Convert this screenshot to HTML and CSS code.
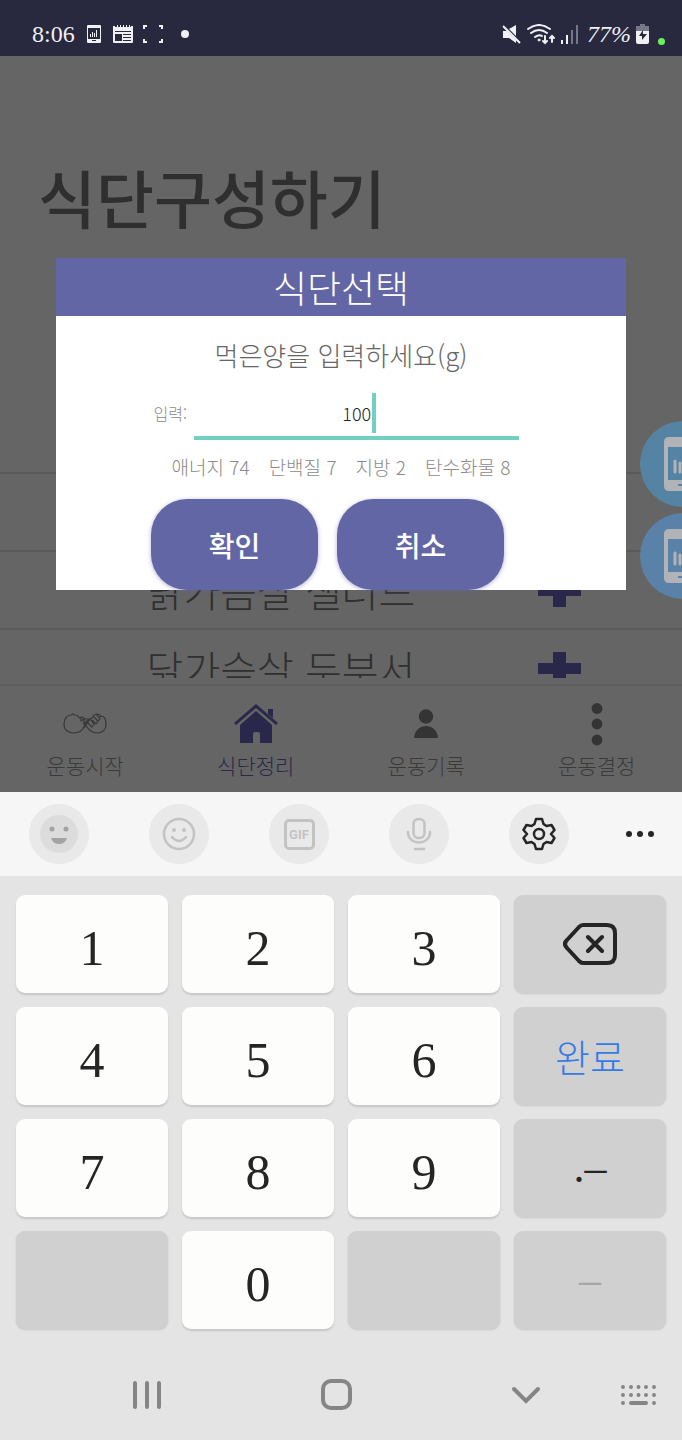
FILE: index.html
```html
<!DOCTYPE html>
<html lang="ko">
<head>
<meta charset="utf-8">
<meta name="viewport" content="width=device-width, initial-scale=1">
<title>식단구성하기</title>
<link rel="stylesheet" href="styles.css">
</head>
<body>
<header class="status">
  <div class="status-group">
    <time class="status-text">8:06</time>
    <svg class="ico-phone" width="14" height="18" viewBox="0 0 14 18"><path fill="#f0f0f5" fill-rule="evenodd" d="M1 0h12q1 0 1 1v16q0 1-1 1H1q-1 0-1-1V1q0-1 1-1zM1 3v11h12V3zM5 16h4v-1H5z"/><path stroke="#f0f0f5" d="M3.500 9v3M5.500 7v5M7.500 8v4M9.500 5v7"/></svg>
    <svg width="20" height="18" viewBox="0 0 20 18"><path fill="#f0f0f5" fill-rule="evenodd" d="M0 1h2v1h2V0h1v2h2V0h1v2h2V0h1v2h2V0h1v2h2V0h1v2h1V1h2v16q0 1-1 1H1q-1 0-1-1zM2 6v1h16V6zM2 9v7h7V9zM10 9v1h8V9zM10 12v1h8v-1zM10 15v1h8v-1z"/></svg>
    <svg width="20" height="18" viewBox="0 0 20 18" fill="none" stroke="#f0f0f5" stroke-width="2"><path d="M1 4V1h3M16 1h3v3M1 14v3h3M16 17h3v-3"/></svg>
    <span class="status-dot"></span>
  </div>
  <div class="status-group status-right">
    <svg width="20" height="20" viewBox="0 0 20 20"><path fill="#f0f0f5" d="M1 7h4l9 9v3l-7-5H1zM7 5l7-4v11z"/><path stroke="#f0f0f5" stroke-width="2" d="M1 2l17 17"/></svg>
    <svg width="28" height="21" viewBox="0 0 28 21" fill="none" stroke="#f0f0f5" stroke-width="2" stroke-linecap="round"><path d="M1 5Q12-3 23 5M4 9q8-6 16 0M8 13q4-3 7-1"/><circle cx="12" cy="16" r="1" fill="#f0f0f5" stroke-width="1"/><path d="M18 12v7M16 17l2 2 2-2M25 18v-6M23 14l2-2 2 2"/></svg>
    <svg width="18" height="19" viewBox="0 0 18 19" stroke-width="2" stroke="#f0f0f5"><path d="M2 15v4M7 10v9"/><path d="M12 5v14M17 0v19" stroke="#77778a"/></svg>
    <span class="status-text battery-text">77%</span>
    <svg width="13" height="20" viewBox="0 0 13 20"><path fill="#77778a" d="M4 0h5v2h4v7H0V2h4z"/><path fill="#f0f0f5" d="M0 7h13v11q0 2-2 2H2q-2 0-2-2z"/><path fill="#28283f" d="M7 6L3 12h3v4l5-6H7z"/></svg>
    <span class="privacy-dot"></span>
  </div>
</header>

<main class="app">
  <h1 class="page-title">식단구성하기</h1>
  <ul class="foods">
    <li class="food"></li>
    <li class="food">
      <span class="food-name">닭가슴살 샐러드</span>
      <button class="add" aria-label="추가"><svg width="43" height="33" viewBox="0 0 43 33"><path fill="#29284a" d="M15 0h13v11h15v11H28v11H15V22H0V11h15z"/></svg></button>
    </li>
    <li class="food">
      <span class="food-name">닭가슴살 두부서</span>
      <button class="add" aria-label="추가"><svg width="43" height="33" viewBox="0 0 43 33"><path fill="#29284a" d="M15 0h13v11h15v11H28v11H15V22H0V11h15z"/></svg></button>
    </li>
  </ul>
  <nav class="tabs">
    <a class="tab" href="#start">
      <svg width="44" height="44" viewBox="0 0 44 44" fill="none" stroke="#383838" stroke-width="1.200" stroke-linejoin="round"><path d="M22 24q-4 7-11 7C5 31 1 28 1 22c0-5 3-9 7-9l2-1 2 1 3 1 1 2 3-1 3 2h5l-4 6-3 3M18 15v4l3-2v4l3-2M20 26l5-8 4-2 2-3 3-1 3 1v2l2-1c3 1 4 5 4 8 0 6-4 9-9 9-6 0-9-5-14-10M27 17l4 5-2 3-4-4M30 14l5 5-2 3-4-4M33 12l4 5-2 2"/></svg>
      <span>운동시작</span>
    </a>
    <a class="tab tab-active" href="#diet">
      <svg width="44" height="44" viewBox="0 0 44 44" fill="#29284a"><path d="M22 2l22 19-2 2L22 6 2 23l-2-2zM34 7h5v9l-5-4zM22 9l16 14v18H26V32q0-2-2-2h-3q-2 0-2 2v9H6V23z"/></svg>
      <span>식단정리</span>
    </a>
    <a class="tab" href="#record">
      <svg width="44" height="44" viewBox="0 0 44 44" fill="#343434"><circle cx="22" cy="14.500" r="7.200"/><path d="M10 36c1-16 23-16 24 0z"/></svg>
      <span>운동기록</span>
    </a>
    <a class="tab" href="#decide">
      <svg width="44" height="44" viewBox="0 0 44 44" fill="#343434"><circle cx="22" cy="6.500" r="5.400"/><circle cx="22" cy="22" r="5.400"/><circle cx="22" cy="38" r="5.400"/></svg>
      <span>운동결정</span>
    </a>
  </nav>

  <div class="bubbles">
    <div class="bubble"><svg width="38" height="54" viewBox="0 0 38 54"><path fill="#b1b3b6" fill-rule="evenodd" d="M5 0h28q5 0 5 5v44q0 5-5 5H5q-5 0-5-5V5q0-5 5-5zM4 10v33h30V10zM14 47v2h10v-2z"/><path stroke="#b1b3b6" stroke-width="3" stroke-linecap="round" d="M11 24v11M16 26v9M22 20v15M28 17v18"/></svg></div>
    <div class="bubble bubble-alt"><svg width="38" height="54" viewBox="0 0 38 54"><path fill="#b1b3b6" fill-rule="evenodd" d="M5 0h28q5 0 5 5v44q0 5-5 5H5q-5 0-5-5V5q0-5 5-5zM4 10v33h30V10zM14 47v2h10v-2z"/><path stroke="#b1b3b6" stroke-width="3" stroke-linecap="round" d="M11 24v11M16 26v9M22 20v15M28 17v18"/></svg></div>
  </div>

  <div class="overlay">
    <form class="dialog" role="dialog" aria-labelledby="dialog-title">
      <h2 class="dialog-title" id="dialog-title">식단선택</h2>
      <p class="prompt">먹은양을 입력하세요(g)</p>
      <div class="field">
        <label class="field-label" for="amount">입력:</label>
        <div class="field-box">
          <input class="field-input" id="amount" type="text" inputmode="numeric" value="100">
          <span class="caret"></span>
        </div>
      </div>
      <div class="facts"><span>애너지 74</span><span>단백질 7</span><span>지방 2</span><span>탄수화물 8</span></div>
      <div class="actions">
        <button class="action" type="button">확인</button>
        <button class="action" type="button">취소</button>
      </div>
    </form>
  </div>
</main>

<section class="keyboard">
  <div class="tools">
    <button class="tool" aria-label="스티커"><svg width="38" height="38" viewBox="0 0 38 38"><circle cx="19" cy="19" r="19" fill="#dcdcdc"/><g fill="#a3a3a3"><circle cx="12" cy="14" r="2.500"/><circle cx="26" cy="14" r="2.500"/><path d="M11 23h16q-2 6-8 6t-8-6z"/></g></svg></button>
    <button class="tool" aria-label="이모티콘"><svg width="34" height="34" viewBox="0 0 34 34" fill="none" stroke="#c3c3c3" stroke-width="2.500" stroke-linecap="round"><circle cx="17" cy="17" r="15"/><path d="M10 20q7 8 14 0"/><g fill="#c3c3c3" stroke="none"><circle cx="12" cy="13" r="2"/><circle cx="22" cy="13" r="2"/></g></svg></button>
    <button class="tool" aria-label="GIF"><span class="gif">GIF</span></button>
    <button class="tool" aria-label="음성 입력"><svg width="26" height="34" viewBox="0 0 26 34" fill="none" stroke="#c3c3c3" stroke-width="2.500" stroke-linecap="round"><rect x="7.500" y="2" width="11" height="19" rx="5"/><path d="M2 15c0 14 22 14 22 0M9 32h9"/></svg></button>
    <button class="tool" aria-label="설정"><svg width="34" height="34" viewBox="0 0 34 34" fill="none" stroke="#252525" stroke-width="2.500" stroke-linejoin="round"><path d="M14 2h6l1.500 5 3 2 5-1 3 5-3.500 4 3.500 4-3 5-5-1-3 2L20 32h-6l-1.500-5-3-2-5 1-3-5L5 17l-3.500-4 3-5 5 1 3-2z"/><circle cx="17" cy="17" r="5"/></svg></button>
    <button class="tool tool-more" aria-label="더보기"><svg width="30" height="8" viewBox="0 0 30 8" fill="#252525"><circle cx="4" cy="4" r="3"/><circle cx="15" cy="4" r="3"/><circle cx="26" cy="4" r="3"/></svg></button>
  </div>
  <div class="keys">
    <button class="key">1</button><button class="key">2</button><button class="key">3</button>
    <button class="key key-gray" aria-label="지우기"><svg width="54" height="42" viewBox="0 0 54 42" fill="none" stroke="#252525" stroke-width="4" stroke-linecap="round" stroke-linejoin="round"><path d="M20 2h24q8 0 8 8v22q0 8-8 8H20q-2 0-4-2L4 25q-4-4 0-8L16 4q2-2 4-2zM25 14l14 14M39 14L25 28"/></svg></button>
    <button class="key">4</button><button class="key">5</button><button class="key">6</button>
    <button class="key key-gray key-done">완료</button>
    <button class="key">7</button><button class="key">8</button><button class="key">9</button>
    <button class="key key-gray key-punct">.–</button>
    <button class="key key-gray" aria-label="빈 키"></button><button class="key">0</button><button class="key key-gray" aria-label="빈 키"></button>
    <button class="key key-gray key-off">–</button>
  </div>
  <div class="sysnav">
    <button class="sys" aria-label="최근 앱"><svg width="28" height="28" viewBox="0 0 28 28" stroke="#858585" stroke-width="4" stroke-linecap="round"><path d="M2 2v24M14 2v24M26 2v24"/></svg></button>
    <button class="sys" aria-label="홈"><svg width="31" height="31" viewBox="0 0 31 31" fill="none" stroke="#858585" stroke-width="4"><rect x="2" y="2" width="27" height="27" rx="8"/></svg></button>
    <button class="sys" aria-label="키보드 닫기"><svg width="30" height="18" viewBox="0 0 30 18" fill="none" stroke="#858585" stroke-width="4" stroke-linecap="round"><path d="M3 3l12 12L27 3"/></svg></button>
    <button class="sys sys-last" aria-label="키보드 전환"><svg width="35" height="20" viewBox="0 0 35 20" fill="none" stroke="#858585" stroke-width="4" stroke-linecap="round"><path d="M2 2h0M10 2h0M17.500 2h0M25 2h0M33 2h0M2 10h0M10 10h0M17.500 10h0M25 10h0M33 10h0M2 18h0M10 18h15M33 18h0"/></svg></button>
  </div>
</section>
</body>
</html>
```

FILE: styles.css
```css
* { box-sizing: border-box; }
body {
  margin: 0;
  min-height: 100vh;
  display: flex;
  flex-direction: column;
  background: #e4e4e4;
  font-family: "Noto Sans CJK KR", sans-serif;
  font-weight: 300;
}
h1, h2, p, ul { margin: 0; padding: 0; }
button { border: 0; padding: 0; margin: 0; background: none; font: inherit; color: inherit; }
svg { display: block; flex: none; }

.status {
  display: flex;
  justify-content: space-between;
  align-items: center;
  height: 56px;
  padding: 12px 17px 0 32px;
  background: #28283f;
  color: #f0f0f5;
}
.status-group { display: flex; align-items: center; gap: 10px; }
.status-group > .ico-phone { margin: 0 2px; }
.status-right { gap: 5px; }
.status-text { font-family: "Liberation Serif", serif; font-size: 24px; line-height: 24px; }
.battery-text { font-style: italic; padding-left: 4px; }
.status-dot { width: 8px; height: 8px; margin-left: 8px; border-radius: 50%; background: #f0f0f5; }
.privacy-dot { width: 7px; height: 7px; margin: 14px 0 0 4px; border-radius: 50%; background: #6df05c; }

.app {
  position: relative;
  overflow: hidden;
  display: flex;
  flex-direction: column;
  justify-content: space-between;
  min-height: 736px;
  background: #656565;
}
.page-title {
  padding: 100px 38px 0;
  font-size: 63px;
  line-height: 80px;
  font-weight: 500;
  color: #2f2f2f;
}
.foods { list-style: none; height: 206px; overflow: hidden; margin: auto 0 6px; }
.food {
  display: flex;
  align-items: center;
  height: 78px;
  padding: 0 101px 0 24px;
  border-top: 2px solid #5a5a5a;
}
.food-name { flex: 1; text-align: center; font-size: 40px; line-height: 60px; color: #303030; }
.tabs {
  display: grid;
  grid-template-columns: repeat(4, 1fr);
  height: 108px;
  padding-top: 16px;
  border-top: 2px solid #5e5e5e;
}
.tab {
  display: flex;
  flex-direction: column;
  align-items: center;
  gap: 4px;
  color: #3a3a3a;
  font-size: 21px;
  line-height: 30px;
  text-decoration: none;
}
.tab-active { color: #29284a; }

.bubbles { position: absolute; top: 365px; right: -44px; display: flex; flex-direction: column; gap: 6px; }
.bubble {
  display: flex;
  align-items: center;
  justify-content: center;
  width: 86px;
  height: 86px;
  border-radius: 50%;
  background: #5583a4;
}
.bubble-alt { background: #5a82a8; }

.overlay {
  position: absolute;
  inset: 0;
  display: flex;
  align-items: center;
  padding: 0 56px;
}
.dialog { flex: 1; background: #fff; text-align: center; }
.dialog-title {
  background: #6366a5;
  color: #fff;
  font-size: 37px;
  line-height: 58px;
  font-weight: 300;
}
.prompt { padding-top: 20px; font-size: 26px; line-height: 38px; color: #666; }
.field { display: flex; align-items: center; justify-content: center; gap: 7px; margin-top: 18px; padding-right: 9px; }
.field-label { font-size: 16px; line-height: 20px; padding-bottom: 6px; color: #8a8a8a; }
.field-box { position: relative; width: 58%; }
.field-input {
  display: block;
  width: 100%;
  height: 48px;
  padding: 0 0 2px;
  border: 0;
  border-bottom: 4px solid #72d0c2;
  background: none;
  outline: 0;
  text-align: center;
  font: inherit;
  font-size: 18px;
  color: #222;
}
.caret { position: absolute; top: 1px; left: calc(50% + 15px); width: 4px; height: 40px; background: #72d0c2; }
.facts { display: flex; justify-content: center; gap: 19px; padding: 12px 0 17px; font-size: 19px; line-height: 30px; color: #8a8a8a; }
.actions { display: flex; justify-content: center; gap: 19px; padding-right: 27px; }
.action {
  width: 167px;
  height: 91px;
  border-radius: 36px;
  background: #6366a5;
  box-shadow: 0 1px 4px #6366a580;
  color: #fff;
  font-size: 28px;
  font-weight: 500;
}

.keyboard { flex: 1; display: flex; flex-direction: column; }
.tools {
  display: flex;
  gap: 60px;
  align-items: center;
  height: 84px;
  padding: 0 11px 0 29px;
  background: #f6f6f6;
}
.tool {
  display: flex;
  align-items: center;
  justify-content: center;
  flex: none;
  width: 60px;
  height: 60px;
  border-radius: 50%;
  background: #e9e9e9;
}
.tools > .tool-more { background: none; margin-left: -19px; }
.gif {
  width: 31px;
  border: 3px solid #c3c3c3;
  border-radius: 5px;
  font: bold 13px/25px Roboto, sans-serif;
  color: #c3c3c3;
}
.keys { display: grid; grid-template-columns: repeat(4, 1fr); gap: 14px; padding: 19px 16px 0; }
.key {
  display: flex;
  align-items: center;
  justify-content: center;
  height: 98px;
  padding-top: 8px;
  border-radius: 9px;
  background: #fdfdfc;
  box-shadow: 0 2px 2px #00000022;
  color: #252525;
  font-family: "Liberation Serif", serif;
  font-size: 50px;
  line-height: 60px;
}
.key-gray { padding-top: 0; background: #d0d0d0; box-shadow: 0 1px 2px #00000022; }
.key-done { color: #347be8; font-family: "Noto Sans CJK KR", sans-serif; font-size: 38px; }
.key-off { color: #a8a8a8; font-size: 44px; }
.key-punct { font-size: 44px; }
.sysnav {
  flex: 1;
  display: grid;
  grid-template-columns: repeat(3, 1fr) 61px;
  align-items: center;
  padding: 20px 0 0 52px;
}
.sys { display: flex; justify-content: center; }
.sys-last { justify-content: flex-start; }
```
